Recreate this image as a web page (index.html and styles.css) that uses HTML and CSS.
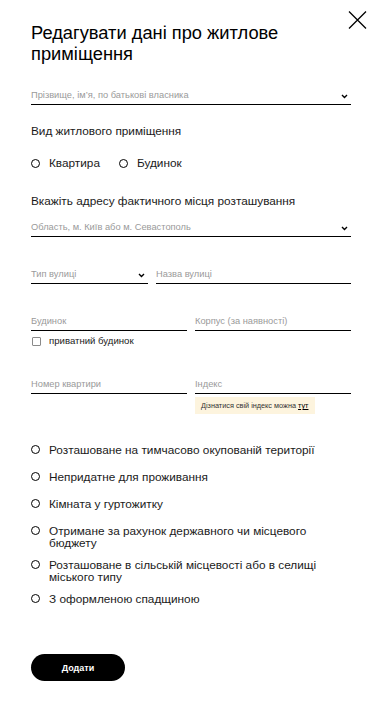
FILE: index.html
```html
<!DOCTYPE html>
<html lang="uk">
<head>
  <meta charset="UTF-8">
  <meta name="viewport" content="width=device-width, initial-scale=1.0">
  <title>Редагувати дані про житлове приміщення</title>
  <link rel="stylesheet" href="styles.css">
</head>
<body>

  <div class="modal">
    <!-- Close button -->
    <button class="close" aria-label="Закрити">
      <svg width="19" height="18" viewBox="0 0 19 18"><path d="M1 0.5 L18 17.5 M18 0.5 L1 17.5" stroke="#000" stroke-width="1.3" fill="none"/></svg>
    </button>

    <h1 class="title">Редагувати дані про житлове приміщення</h1>

    <div class="field field-owner">
      <span class="placeholder">Прізвище, ім’я, по батькові власника</span>
      <svg class="chevron" width="7" height="5" viewBox="0 0 7 5"><path d="M1 1 L3.5 3.5 L6 1" stroke="#000" stroke-width="1.4" fill="none"/></svg>
    </div>

    <p class="label label-type">Вид житлового приміщення</p>
    <div class="radio-row">
      <label class="radio"><span class="circle"></span>Квартира</label>
      <label class="radio"><span class="circle"></span>Будинок</label>
    </div>

    <p class="label label-address">Вкажіть адресу фактичного місця розташування</p>
    <div class="field field-region">
      <span class="placeholder">Область, м. Київ або м. Севастополь</span>
      <svg class="chevron" width="7" height="5" viewBox="0 0 7 5"><path d="M1 1 L3.5 3.5 L6 1" stroke="#000" stroke-width="1.4" fill="none"/></svg>
    </div>

    <div class="row row-street">
      <div class="field">
        <span class="placeholder">Тип вулиці</span>
        <svg class="chevron" width="7" height="5" viewBox="0 0 7 5"><path d="M1 1 L3.5 3.5 L6 1" stroke="#000" stroke-width="1.4" fill="none"/></svg>
      </div>
      <div class="field">
        <span class="placeholder">Назва вулиці</span>
      </div>
    </div>

    <div class="row row-house">
      <div class="field"><span class="placeholder">Будинок</span></div>
      <div class="field"><span class="placeholder">Корпус (за наявності)</span></div>
    </div>
    <label class="checkbox"><span class="box"></span>приватний будинок</label>

    <div class="row row-flat">
      <div class="field"><span class="placeholder">Номер квартири</span></div>
      <div>
        <div class="field"><span class="placeholder">Індекс</span></div>
        <div class="hint">Дізнатися свій індекс можна <u>тут</u></div>
      </div>
    </div>

    <div class="options">
      <label class="radio option"><span class="circle"></span><span>Розташоване на тимчасово окупованій території</span></label>
      <label class="radio option"><span class="circle"></span><span>Непридатне для проживання</span></label>
      <label class="radio option"><span class="circle"></span><span>Кімната у гуртожитку</span></label>
      <label class="radio option"><span class="circle"></span><span>Отримане за рахунок державного чи місцевого бюджету</span></label>
      <label class="radio option"><span class="circle"></span><span>Розташоване в сільській місцевості або в селищі міського типу</span></label>
      <label class="radio option"><span class="circle"></span><span>З оформленою спадщиною</span></label>
    </div>

    <button class="submit">Додати</button>
  </div>

</body>
</html>
```

FILE: styles.css
```css
body {
  font-family: "Liberation Sans", Arial, sans-serif;
  margin: 0;
  padding: 0;
  background: #fff;
  color: #000;
}
.modal {
  position: relative;
  padding: 22px 25px 40px 31px;
}
.close {
  position: absolute;
  top: 11px;
  right: 9px;
  background: none;
  border: none;
  padding: 0;
  cursor: pointer;
}
.close svg {
  display: block;
}
.title {
  margin: 0;
  font-size: 18.3px;
  line-height: 21px;
  font-weight: normal;
  width: 300px;
}
.field {
  position: relative;
  display: flex;
  align-items: center;
  justify-content: space-between;
  border-bottom: 1px solid #000;
  padding-bottom: 3px;
  height: 12px;
}
.placeholder {
  font-size: 9.3px;
  line-height: 12px;
  color: #9a9a9a;
  white-space: nowrap;
}
.chevron {
  margin-right: 3px;
  margin-top: 3px;
}
.field-owner {
  margin-top: 25px;
}
.label {
  margin: 0;
  font-size: 11.8px;
  line-height: 14px;
  color: #1a1a1a;
}
.label-type {
  margin-top: 19px;
}
.label-address {
  margin-top: 24px;
}
.radio-row {
  display: flex;
  gap: 19px;
  margin-top: 18px;
}
.radio {
  display: flex;
  align-items: center;
  font-size: 11.8px;
  line-height: 14px;
  color: #1a1a1a;
}
.circle {
  flex: none;
  width: 7px;
  height: 7px;
  border: 1.5px solid #000;
  border-radius: 50%;
  margin-right: 9px;
}
.field-region {
  margin-top: 13px;
}
.row {
  display: grid;
  grid-template-columns: 1fr 1fr;
  gap: 8px;
}
.row-street {
  grid-template-columns: 117px 1fr;
  margin-top: 31px;
}
.row-house {
  margin-top: 31px;
}
.checkbox {
  display: flex;
  align-items: center;
  margin-top: 4px;
  font-size: 9.6px;
  line-height: 12px;
  color: #1a1a1a;
}
.box {
  width: 7px;
  height: 7px;
  border: 1px solid #8a8a8a;
  border-radius: 1px;
  margin: 0 8px 0 1px;
}
.row-flat {
  margin-top: 31px;
}
.hint {
  display: inline-block;
  margin-top: 3px;
  padding: 4px 7px 4px 6px;
  background: #fdf4de;
  font-size: 7.3px;
  line-height: 9px;
  color: #333;
}
.hint u {
  color: #000;
}
.options {
  display: flex;
  flex-direction: column;
  gap: 10px;
  margin-top: 30px;
}
.option {
  align-items: flex-start;
  min-height: 17px;
  font-size: 11.8px;
  line-height: 12px;
}
.option .circle {
  margin-top: 1px;
}
.option span:last-child {
  max-width: 285px;
}
.submit {
  display: block;
  margin-top: 44px;
  width: 94px;
  height: 27px;
  border: none;
  border-radius: 14px;
  background: #000;
  color: #fff;
  font-family: "Liberation Sans", Arial, sans-serif;
  font-size: 9px;
  font-weight: bold;
  cursor: pointer;
}
```
